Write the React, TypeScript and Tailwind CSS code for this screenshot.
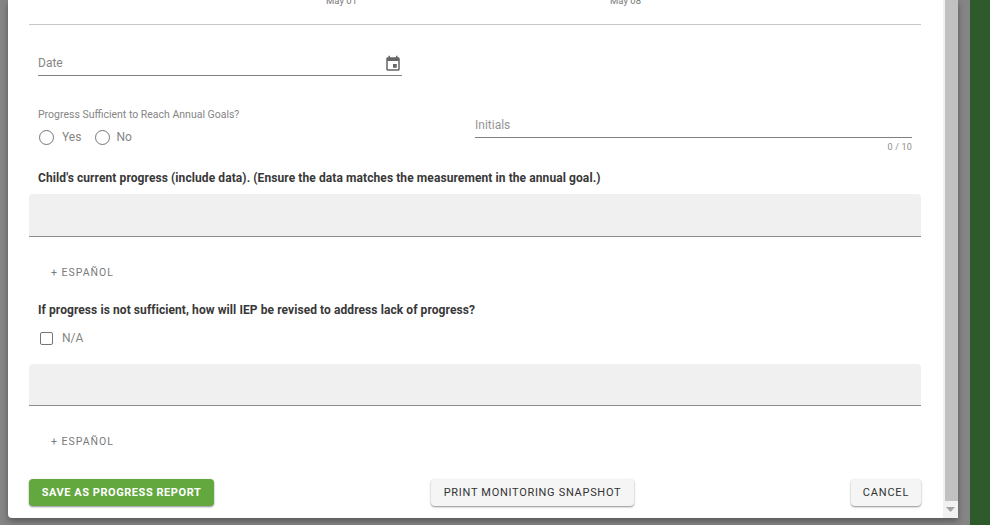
import React from "react";

function Espanol() {
  return (
    <div className="pl-[22px] h-[14px] flex items-center text-[10.5px] leading-none tracking-[1px] text-[#7a7a7a]">+ ESPAÑOL</div>
  );
}

function Btn({ children, className }: { children: React.ReactNode; className: string }) {
  return (
    <div className={"h-[27px] pt-[2px] flex items-center justify-center rounded-[4px] text-[11px] shadow-[0_1px_2px_rgba(0,0,0,0.45)] " + className}>
      {children}
    </div>
  );
}

export default function App() {
  return (
    <div className="w-[990px] h-[525px] overflow-hidden flex bg-[#858585] font-['Roboto',sans-serif]">
      <div className="w-2 shrink-0" />
      <div className="w-[950px] h-[518px] shrink-0 bg-white flex rounded-bl-[4px] shadow-[0_3px_6px_rgba(0,0,0,0.35)] overflow-hidden">
        <div className="w-[935px] shrink-0 pl-[21px] pr-[22px]">
          <div className="h-[6px] overflow-hidden flex items-end">
            <div className="w-[313px] shrink-0 text-right text-[9.5px] leading-[12px] text-[#777] translate-y-[1px]">
              <span className="mr-[-15px]">May 01</span>
            </div>
            <div className="w-[284px] shrink-0 text-right text-[9.5px] leading-[12px] text-[#777] translate-y-[1px]">
              <span className="mr-[-15px]">May 08</span>
            </div>
          </div>
          <div className="mt-[18px] h-px bg-[#c8c8c8]" />

          <div className="mt-[29px] ml-[9px] w-[364px] h-[22px] border-b border-[#808080] flex items-center justify-between pb-[2px]">
            <span className="text-[12px] leading-[16px] text-[#858585] -translate-y-px">Date</span>
            <svg width="18" height="18" viewBox="0 0 24 24" className="mt-[1px]" fill="#666">
              <path d="M17 12h-5v5h5v-5zM16 1v2H8V1H6v2H5c-1.11 0-1.99.9-1.99 2L3 19c0 1.1.89 2 2 2h14c1.1 0 2-.9 2-2V5c0-1.1-.9-2-2-2h-1V1h-2zm3 18H5V8h14v11z" />
            </svg>
          </div>

          <div className="mt-[31px] ml-[9px] flex">
            <div className="w-[437px] shrink-0">
              <div className="text-[10.5px] leading-[16px] text-[#858585]">Progress Sufficient to Reach Annual Goals?</div>
              <div className="mt-[6px] flex items-center h-[16px] text-[12px] text-[#858585]">
                <span className="ml-px w-[15px] h-[15px] rounded-full border-[1.5px] border-[#757575]" />
                <span className="ml-2">Yes</span>
                <span className="ml-[14px] w-[15px] h-[15px] rounded-full border-[1.5px] border-[#757575]" />
                <span className="ml-[6px]">No</span>
              </div>
            </div>
            <div className="flex-1 pt-[8px] mr-[9px]">
              <div className="h-[23px] border-b border-[#808080] text-[12px] leading-[20px] text-[#959595]">Initials</div>
              <div className="text-right text-[9px] leading-[12px] tracking-[0.2px] text-[#8c8c8c] mt-[3px]">0 / 10</div>
            </div>
          </div>

          <div className="mt-[17px] ml-[9px] text-[12px] leading-[16px] font-bold tracking-[0.09px] text-[#383838]">
            Child's current progress (include data). (Ensure the data matches the measurement in the annual goal.)
          </div>
          <div className="mt-[8px] h-[43px] bg-[#f0f0f0] rounded-t-[4px] border-b border-[#8c8c8c]" />
          <div className="mt-[29px]"><Espanol /></div>
          <div className="mt-[22px] ml-[9px] text-[12px] leading-[16px] font-bold tracking-[0.08px] text-[#383838]">
            If progress is not sufficient, how will IEP be revised to address lack of progress?
          </div>
          <div className="mt-[12px] ml-[11px] flex items-center h-[16px] text-[12px] text-[#858585]">
            <span className="w-[13px] h-[13px] rounded-[2px] border-[1.5px] border-[#757575]" />
            <span className="ml-[9px]">N/A</span>
          </div>
          <div className="mt-[18px] h-[42px] bg-[#f0f0f0] rounded-t-[4px] border-b border-[#8c8c8c]" />
          <div className="mt-[29px]"><Espanol /></div>
          <div className="mt-[30px] flex items-center justify-between">
            <Btn className="w-[185px] bg-[#63a73f] text-white font-bold tracking-[0.55px]">SAVE AS PROGRESS REPORT</Btn>
            <Btn className="w-[203px] bg-[#f5f5f5] text-[#333] tracking-[0.7px]">PRINT MONITORING SNAPSHOT</Btn>
            <Btn className="w-[70px] bg-[#f5f5f5] text-[#333] tracking-[0.8px]">CANCEL</Btn>
          </div>
        </div>
        <div className="w-[15px] shrink-0 bg-[#f1f1f1] flex flex-col pl-[2px]">
          <div className="h-[501px] w-[13px] bg-[#c1c1c1]" />
          <div className="flex-1 flex justify-center items-center pr-[2px]">
            <svg width="9" height="5" viewBox="0 0 9 5"><path d="M0 0h9L4.5 5z" fill="#a3a3a3" /></svg>
          </div>
        </div>
      </div>
      <div className="w-3 shrink-0" />
      <div className="flex-1 bg-[#2f5a2b]" />
    </div>
  );
}
